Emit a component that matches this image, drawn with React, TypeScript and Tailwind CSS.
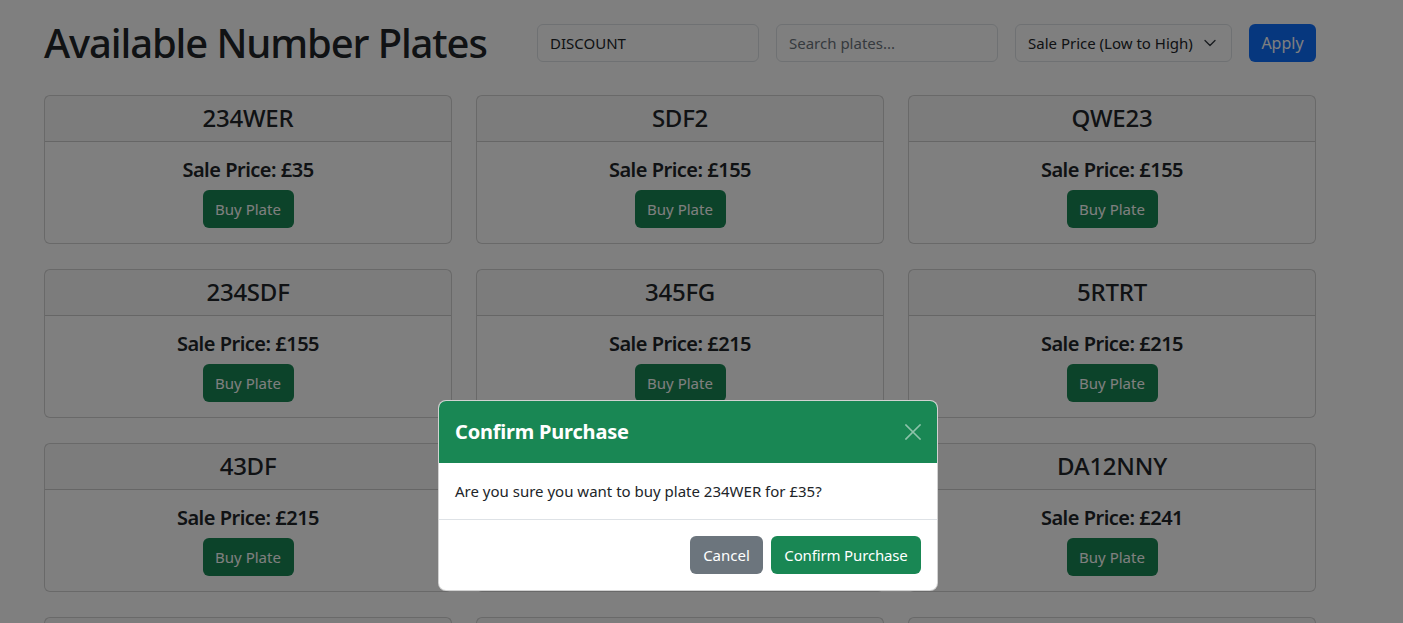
import React from "react";

type Plate = { reg: string; price: number };

const plates: Plate[] = [
  { reg: "234WER", price: 35 },
  { reg: "SDF2", price: 155 },
  { reg: "QWE23", price: 155 },
  { reg: "234SDF", price: 155 },
  { reg: "345FG", price: 215 },
  { reg: "5RTRT", price: 215 },
  { reg: "43DF", price: 215 },
  { reg: "GH56JKL", price: 225 },
  { reg: "DA12NNY", price: 241 },
  { reg: "AB12CDE", price: 250 },
  { reg: "XY99ZZZ", price: 275 },
  { reg: "MN34OPQ", price: 299 },
];

function PlateCard({ plate }: { plate: Plate }) {
  return (
    <div className="flex h-[149px] flex-col rounded-[6px] border border-[rgba(0,0,0,0.175)] bg-white">
      <div className="flex h-[46px] items-center justify-center border-b border-[rgba(0,0,0,0.175)] bg-[rgba(33,37,41,0.03)] px-4 text-[24px] font-medium leading-[1.2] tracking-[-0.01em] text-[#212529]">
        {plate.reg}
      </div>
      <div className="flex h-[102px] flex-col items-center px-4 pt-4">
        <div className="mb-2 h-6 text-[20px] font-semibold leading-[1.2] tracking-[-0.025em] text-[#212529]">
          Sale Price: £{plate.price}
        </div>
        <button className="h-[38px] w-[91px] rounded-[6px] bg-[#198754] text-[15px] leading-6 text-white">
          Buy Plate
        </button>
      </div>
    </div>
  );
}

export default function App() {
  return (
    <div className="relative h-[623px] overflow-hidden bg-white font-['Noto_Sans',sans-serif] text-[#212529]">
      <div className="pl-[44px] pt-[19px]">
        <div className="flex h-[48px] items-center">
          <h1 className="w-[493px] text-[40px] font-medium leading-[1.2] tracking-[-0.028em] text-[#212529]">
            Available Number Plates
          </h1>
          <div className="flex items-center gap-[17px]">
            <input
              readOnly
              value="DISCOUNT"
              className="h-[38px] w-[222px] rounded-[6px] border border-[#dee2e6] bg-white px-3 text-[15px] text-[#212529] outline-none"
            />
            <input
              readOnly
              placeholder="Search plates..."
              className="h-[38px] w-[222px] rounded-[6px] border border-[#dee2e6] bg-white px-3 text-[15px] text-[#212529] outline-none placeholder:text-[#6c757d]"
            />
            <div className="flex h-[38px] w-[217px] items-center justify-between rounded-[6px] border border-[#dee2e6] bg-white pl-3 pr-[14px] text-[15px] text-[#212529]">
              <span>Sale Price (Low to High)</span>
              <svg width="14" height="10" viewBox="0 0 16 12" fill="none">
                <path d="m2 3 6 6 6-6" stroke="#343a40" strokeWidth="1.6" strokeLinecap="round" strokeLinejoin="round" />
              </svg>
            </div>
            <button className="h-[38px] w-[67px] rounded-[6px] bg-[#0d6efd] text-[16px] text-white">
              Apply
            </button>
          </div>
        </div>

        <div className="mt-[28px] grid w-[1272px] grid-cols-3 gap-x-[24px] gap-y-[25px]">
          {plates.map((p) => (
            <PlateCard key={p.reg} plate={p} />
          ))}
        </div>
      </div>

      {/* backdrop */}
      <div className="absolute inset-0 bg-black/50" />

      {/* modal */}
      <div className="absolute left-[438px] top-[400px] w-[500px] overflow-hidden rounded-[8px] border border-[rgba(0,0,0,0.175)] bg-white">
        <div className="flex h-[62px] items-center justify-between bg-[#198754] px-4">
          <div className="text-[20px] font-bold leading-[1.5] tracking-[-0.01em] text-white">Confirm Purchase</div>
          <svg width="16" height="16" viewBox="0 0 16 16" className="opacity-50">
            <path d="M1 1 15 15M15 1 1 15" stroke="white" strokeWidth="1.6" strokeLinecap="square" />
          </svg>
        </div>
        <div className="p-4 text-[15px] leading-6 text-[#212529]">
          Are you sure you want to buy plate 234WER for £35?
        </div>
        <div className="flex justify-end gap-2 border-t border-[#dee2e6] px-4 py-4">
          <button className="h-[38px] w-[73px] rounded-[6px] bg-[#6c757d] text-[15px] text-white">
            Cancel
          </button>
          <button className="h-[38px] w-[150px] rounded-[6px] bg-[#198754] text-[15px] tracking-[-0.01em] text-white">
            Confirm Purchase
          </button>
        </div>
      </div>
    </div>
  );
}
